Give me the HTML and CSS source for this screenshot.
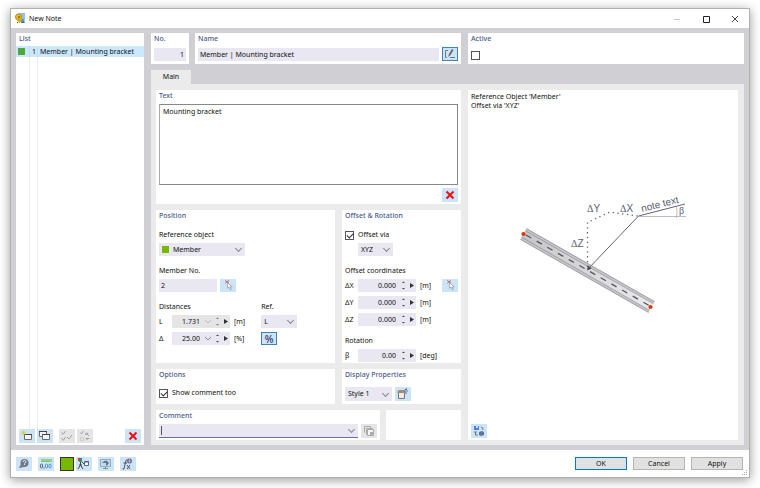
FILE: index.html
```html
<!DOCTYPE html>
<html lang="en">
<head>
    <meta charset="UTF-8">
    <meta name="viewport" content="width=device-width, initial-scale=1.0">
    <title>New Note</title>
    <link rel="stylesheet" href="styles.css">
</head>
<body>
    <div class="window">
        <header class="titlebar">
            <svg class="app-icon" width="11" height="11" viewBox="0 0 11 11">
                <path d="M3 0h7v8H5z" fill="#8fc4e8"/>
                <path d="M6 8l2-3 2 5H6z" fill="#4a91c4"/>
                <circle cx="3.500" cy="4" r="3" fill="#f0c02c" stroke="#b98a10"/>
                <path d="M3 4l4 0-1 5-2 1-2-3z" fill="#dca718"/>
                <circle cx="4" cy="4" r="1" fill="#8c6a12"/>
                <path d="M7 9h2v1H7zM2 9h1v1H2z" fill="#327a52"/>
            </svg>
            <h1>New Note</h1>
            <div class="window-buttons">
                <button aria-label="Minimize"><svg width="8" height="8" viewBox="0 0 8 8"><path d="M1 4.500h6" stroke="#ccc" fill="none"/></svg></button>
                <button aria-label="Maximize"><svg width="8" height="8" viewBox="0 0 8 8"><path d="M1.500 1.500h6v6h-6z" stroke="#222" fill="none"/></svg></button>
                <button aria-label="Close"><svg width="8" height="8" viewBox="0 0 8 8"><path d="M1 1l6 6M7 1L1 7" stroke="#444" fill="none"/></svg></button>
            </div>
        </header>

        <main class="content">
            <section class="panel list-panel">
                <h2>List</h2>
                <ul class="list">
                    <li class="selected"><span class="cell"><i class="swatch"></i></span><span class="cell number">1</span><span class="name">Member | Mounting bracket</span></li>
                    <li class="filler"><span class="cell"></span><span class="cell number"></span><span></span></li>
                </ul>
                <div class="toolbar">
                    <button class="icon-button" aria-label="New"><svg viewBox="0 0 16 14"><path d="M5.500 5.500h7v5h-7z" fill="#f4f4f4" stroke="#6b6b6b"/><path d="M5 5.500h8" stroke="#444"/><path d="M4.500 1.500v5M2 4h5M2.500 2l4 4M6.500 2l-4 4" stroke="#d6cf3a" stroke-width=".8"/></svg></button>
                    <button class="icon-button" aria-label="Copy"><svg viewBox="0 0 16 14"><path d="M2.500 2.500h7v5h-7z" fill="#f4f4f4" stroke="#6b6b6b"/><path d="M2 2.500h8" stroke="#444"/><path d="M5.500 5.500h7v5h-7z" fill="#f4f4f4" stroke="#6b6b6b"/><path d="M5 5.500h8" stroke="#444"/></svg></button>
                    <button class="icon-button gap" disabled aria-label="Check all"><svg viewBox="0 0 16 14"><path d="M3.500 3.500l1 1.500 2-3M3.500 9.500l1 1.500 2-3M8 8l2 2 3-4" stroke="#a2a2a2" fill="none"/><path d="M3 3v2h2M3 9v2h2" stroke="#bbb" fill="none"/></svg></button>
                    <button class="icon-button" disabled aria-label="Invert selection"><svg viewBox="0 0 16 14"><path d="M3.500 3.500l1 1.500 2-3M8 5h3l-1-1.500M8 5q3 0 4 2M12.500 9.500H9L10.500 11" stroke="#a2a2a2" fill="none"/><path d="M3.500 8.500h3v3h-3z" stroke="#ccc" fill="none"/></svg></button>
                    <button class="icon-button last" aria-label="Delete"><svg viewBox="0 0 16 14"><path d="M4.500 3.500l7 7M11.500 3.500l-7 7" stroke="#f01010" stroke-width="2"/></svg></button>
                </div>
            </section>

            <div class="details">
                <div class="top-row">
                    <div class="identity">
                        <section class="panel number-panel">
                            <h2><label for="number">No.</label></h2>
                            <input class="field" type="text" id="number" value="1">
                        </section>
                        <section class="panel name-panel">
                            <h2><label for="name">Name</label></h2>
                            <div class="row">
                                <input class="field" type="text" id="name" value="Member | Mounting bracket">
                                <button class="icon-button pressed" aria-label="Edit name"><svg viewBox="0 0 16 14"><path d="M6 3.500H3.500v7H5M8 10.500h5" stroke="#777" fill="none"/><path d="M6 10l1-3 3-5 1.500 1-3 5z" fill="#666"/></svg></button>
                            </div>
                        </section>
                    </div>
                    <section class="panel active-panel">
                        <h2><label for="active">Active</label></h2>
                        <input class="check" type="checkbox" id="active">
                    </section>
                </div>

                <nav class="tabs"><button class="tab">Main</button></nav>

                <div class="tab-page">
                    <div class="forms">
                        <section class="panel text-panel">
                            <h2><label for="text">Text</label></h2>
                            <textarea id="text">Mounting bracket</textarea>
                            <button class="icon-button" aria-label="Clear text"><svg viewBox="0 0 16 14"><path d="M4.500 3.500l7 7M11.500 3.500l-7 7" stroke="#f01010" stroke-width="2"/></svg></button>
                        </section>

                        <div class="split">
                            <section class="panel">
                                <h2>Position</h2>
                                <div class="group">
                                    <label for="reference">Reference object</label>
                                    <div class="select with-swatch">
                                        <select id="reference"><option>Member</option></select>
                                    </div>
                                </div>
                                <div class="group">
                                    <label for="member">Member No.</label>
                                    <div class="row">
                                        <input class="field member-field" type="text" id="member" value="2">
                                        <button class="icon-button" aria-label="Pick member"><svg viewBox="0 0 16 14"><path d="M5 1.500l4 3M9 1.500l-4 3" stroke="#d9505c"/><path d="M7.500 4v6l1.500-1.500 1.500 3h1l-1-3h2z" fill="#fff" stroke="#999" stroke-width=".8"/></svg></button>
                                    </div>
                                </div>
                                <div class="pair">
                                    <div class="group">
                                        <span class="caption">Distances</span>
                                        <div class="value-row">
                                            <label for="length">L</label>
                                            <div class="spin combo off">
                                                <input type="text" id="length" value="1.731" disabled>
                                                <svg viewBox="0 0 28 13"><path d="M3 5l3 3 3-3" stroke="#bbb" fill="none"/><path d="M14 4l1.500-1.500L17 4zM14 9l1.500 1.500L17 9z" fill="#777"/><path d="M22 4v5l4-2.500z" fill="#333"/></svg>
                                            </div>
                                            <span>[m]</span>
                                        </div>
                                        <div class="value-row">
                                            <label for="delta">Δ</label>
                                            <div class="spin combo">
                                                <input type="text" id="delta" value="25.00">
                                                <svg viewBox="0 0 28 13"><path d="M3 5l3 3 3-3" stroke="#888" fill="none"/><path d="M14 4l1.500-1.500L17 4zM14 9l1.500 1.500L17 9z" fill="#444"/><path d="M22 4v5l4-2.500z" fill="#333"/></svg>
                                            </div>
                                            <span>[%]</span>
                                        </div>
                                    </div>
                                    <div class="group ref-group">
                                        <label for="ref">Ref.</label>
                                        <div class="select">
                                            <select id="ref"><option>L</option></select>
                                        </div>
                                        <button class="icon-button pressed percent">%</button>
                                    </div>
                                </div>
                            </section>

                            <section class="panel">
                                <h2>Offset &amp; Rotation</h2>
                                <div class="group">
                                    <div class="check-row">
                                        <input class="check" type="checkbox" id="offset-via" checked>
                                        <label for="offset-via">Offset via</label>
                                    </div>
                                    <div class="select axis-select">
                                        <select aria-label="Offset axes"><option>XYZ</option></select>
                                    </div>
                                </div>
                                <div class="group">
                                    <span class="caption">Offset coordinates</span>
                                    <div class="value-row">
                                        <label for="dx">ΔX</label>
                                        <div class="spin">
                                            <input type="text" id="dx" value="0.000">
                                            <svg viewBox="10 0 18 13"><path d="M14 4l1.500-1.500L17 4zM14 9l1.500 1.500L17 9z" fill="#444"/><path d="M22 4v5l4-2.500z" fill="#333"/></svg>
                                        </div>
                                        <span>[m]</span>
                                        <button class="icon-button last" aria-label="Pick offset"><svg viewBox="0 0 16 14"><path d="M5 1.500l4 3M9 1.500l-4 3" stroke="#d9505c"/><path d="M7.500 4v6l1.500-1.500 1.500 3h1l-1-3h2z" fill="#fff" stroke="#999" stroke-width=".8"/></svg></button>
                                    </div>
                                    <div class="value-row">
                                        <label for="dy">ΔY</label>
                                        <div class="spin">
                                            <input type="text" id="dy" value="0.000">
                                            <svg viewBox="10 0 18 13"><path d="M14 4l1.500-1.500L17 4zM14 9l1.500 1.500L17 9z" fill="#444"/><path d="M22 4v5l4-2.500z" fill="#333"/></svg>
                                        </div>
                                        <span>[m]</span>
                                    </div>
                                    <div class="value-row">
                                        <label for="dz">ΔZ</label>
                                        <div class="spin">
                                            <input type="text" id="dz" value="0.000">
                                            <svg viewBox="10 0 18 13"><path d="M14 4l1.500-1.500L17 4zM14 9l1.500 1.500L17 9z" fill="#444"/><path d="M22 4v5l4-2.500z" fill="#333"/></svg>
                                        </div>
                                        <span>[m]</span>
                                    </div>
                                </div>
                                <div class="group">
                                    <span class="caption">Rotation</span>
                                    <div class="value-row">
                                        <label for="beta">β</label>
                                        <div class="spin">
                                            <input type="text" id="beta" value="0.00">
                                            <svg viewBox="10 0 18 13"><path d="M14 4l1.500-1.500L17 4zM14 9l1.500 1.500L17 9z" fill="#444"/><path d="M22 4v5l4-2.500z" fill="#333"/></svg>
                                        </div>
                                        <span>[deg]</span>
                                    </div>
                                </div>
                            </section>
                        </div>

                        <div class="split">
                            <section class="panel options-panel">
                                <h2>Options</h2>
                                <div class="check-row">
                                    <input class="check" type="checkbox" id="show-comment" checked>
                                    <label for="show-comment">Show comment too</label>
                                </div>
                            </section>
                            <section class="panel options-panel">
                                <h2><label for="style">Display Properties</label></h2>
                                <div class="row">
                                    <div class="select style-select">
                                        <select id="style"><option>Style 1</option></select>
                                    </div>
                                    <button class="icon-button" aria-label="Edit style"><svg viewBox="0 0 16 14"><path d="M3.500 5.500h6v6h-6z" fill="#f0ece6" stroke="#777"/><path d="M2 5l2-2h5l2 2-1 1H3z" fill="#a88a6c"/><path d="M9 3l3-2v2z" fill="#4f79b8"/><path d="M9 4h4M10 6h2" stroke="#5d7fa5"/></svg></button>
                                </div>
                            </section>
                        </div>

                        <div class="comment-row">
                            <section class="panel">
                                <h2><label for="comment">Comment</label></h2>
                                <div class="row">
                                    <div class="select comment-box">
                                        <input type="text" id="comment">
                                    </div>
                                    <button class="icon-button" disabled aria-label="Comment library"><svg viewBox="0 0 16 14"><path d="M3.500 8.500v-6h6v2M5.500 10.500v-6h6v1" stroke="#aaa" fill="none"/><path d="M6.500 5.500h6v6h-6z" fill="#f4f4f4" stroke="#aaa"/><path d="M9 8h3v3H9z" fill="#aaa"/></svg></button>
                                </div>
                            </section>
                            <section class="panel"></section>
                        </div>
                    </div>

                    <section class="panel preview">
                        <p>Reference Object 'Member'<br>Offset via 'XYZ'</p>
                        <svg class="diagram" width="190" height="154" viewBox="508 190 190 154">
                            <defs>
                                <linearGradient id="beam" x1="0" x2="1">
                                    <stop offset="0" stop-color="#c4c4c4"/>
                                    <stop offset="1" stop-color="#ececec"/>
                                </linearGradient>
                            </defs>
                            <path d="M526.500 228.500l128 73-6 11-128-73z" fill="url(#beam)"/>
                            <path d="M526 229.500l128 73M521 238.500l128 73" stroke="#c3c3c9" stroke-width="2.400"/>
                            <path d="M526.500 228.500l128 73M525.500 230.800l128 73M521.500 237.200l128 73M520.500 239.500l128 73" stroke="#85858e" stroke-width=".6"/>
                            <path d="M526 235l124 71" stroke="#55556a" stroke-width="1.300" stroke-dasharray="6 6.300"/>
                            <circle cx="523.500" cy="234" r="2.100" fill="#d83a0c"/>
                            <circle cx="650.500" cy="307" r="2.100" fill="#d83a0c"/>
                            <path d="M587.500 267v-44.500L610 212l28 4" fill="none" stroke="#666677" stroke-width="1.300" stroke-dasharray="1.300 3.500"/>
                            <path d="M588 269l50.500-53L685 204" fill="none" stroke="#62627a"/>
                            <path d="M587 270.500l1-5 3.500 3z" fill="#44445c"/>
                            <path d="M638.500 216.500H686M676.500 207q1 5 0 11" fill="none" stroke="#aaaab8" stroke-width=".8"/>
                            <g class="diagram-text">
                                <text x="587" y="212"><tspan class="greek">Δ</tspan>Y</text>
                                <text x="620" y="212"><tspan class="greek">Δ</tspan>X</text>
                                <text x="571" y="247"><tspan class="greek">Δ</tspan>Z</text>
                                <text class="greek" x="679" y="214">β</text>
                                <text transform="translate(642 212) rotate(-14)">note text</text>
                            </g>
                        </svg>
                        <button class="icon-button" aria-label="Switch view"><svg viewBox="0 0 16 14"><path d="M3 2h5v4H3z" fill="#4f80e6"/><path d="M5 2h2v2H5z" fill="#cfe0ff"/><path d="M10 3q2 0 2 3M3 8h3M4.500 8v3H7" stroke="#777" fill="none"/><path d="M8 8l3-1 2 1v3l-3 1-2-1z" fill="#627599"/></svg></button>
                    </section>
                </div>
            </div>
        </main>

        <footer class="footer">
            <div class="tools">
                <button class="icon-button" aria-label="Help"><svg viewBox="0 0 16 14"><circle cx="8.500" cy="6" r="4" fill="#747a80"/><path d="M5 7l-2 4 5-1z" fill="#747a80"/><path d="M7 5q0-1.500 1.500-1.500T10 5L8.500 6.500V8" stroke="#d7e8f5" fill="none"/></svg></button>
                <button class="icon-button" aria-label="Units"><svg viewBox="0 0 16 14"><path d="M3 2h11v3H3z" fill="#93d28e"/><path d="M5 4v1M7 4v1M9 4v1M11 4v1" stroke="#5da45d" stroke-width=".7"/><ellipse cx="3.500" cy="9" rx="1.200" ry="2" fill="none" stroke="#444" stroke-width=".8"/><path d="M5.500 10.500h1v1h-1z" fill="#444"/><ellipse cx="8.500" cy="9" rx="1.200" ry="2" fill="none" stroke="#3f7fd6" stroke-width=".8"/><ellipse cx="12" cy="9" rx="1.200" ry="2" fill="none" stroke="#3f7fd6" stroke-width=".8"/></svg></button>
                <button class="color-button" aria-label="Color"></button>
                <button class="icon-button" aria-label="Display"><svg viewBox="0 0 16 14"><path d="M2 1h2v3H2z" fill="#d33"/><path d="M4 1h2v2H4z" fill="#3577d4"/><path d="M3 3h3v2H3z" fill="#38a03b"/><path d="M4.500 5v3L2 12M4.500 8L7 12M3 8h3M6 5l2 2" stroke="#444" fill="none"/><path d="M8.500 4.500h4v4h-4z" fill="#fff" stroke="#667"/><path d="M8 5h5" stroke="#3567a8"/></svg></button>
                <button class="icon-button gap" aria-label="View"><svg viewBox="0 0 16 14"><path d="M2.500 2.500h10v7h-10z" fill="#c2dcef" stroke="#9aabb8"/><path d="M7.500 10v2M5 11.500h5" stroke="#888"/><path d="M4 6q4-5 7 0-1 2-3 3V6z" fill="#5a7a98"/></svg></button>
                <button class="icon-button gap" aria-label="Function"><svg viewBox="0 0 16 14"><path d="M8 3Q6 2 5.500 5L4 12H2.500M3.500 6H7M7 8l3 4M10 8l-3 4" stroke="#555" fill="none"/><circle cx="9.500" cy="4" r="2.500" fill="#5f6689"/><path d="M9.500 2v4M7.500 4h4" stroke="#c2cade" stroke-width=".7"/></svg></button>
            </div>
            <div class="actions">
                <button class="action primary">OK</button>
                <button class="action">Cancel</button>
                <button class="action">Apply</button>
            </div>
            <svg class="grip" width="6" height="6" viewBox="0 0 6 6"><path d="M4 0h1v1H4zM2 2h1v1H2zM4 2h1v1H4zM0 4h1v1H0zM2 4h1v1H2zM4 4h1v1H4z" fill="#aaa"/></svg>
        </footer>
    </div>
</body>
</html>
```
FILE: styles.css
```css
* {
    box-sizing: border-box;
}
body {
    margin: 0;
    padding: 8px 10px 10px;
    min-height: 100vh;
    display: flex;
    background-color: #fff;
    font-family: "Noto Sans", sans-serif;
    font-size: 7px;
    line-height: 12px;
    color: #111;
}
h1, h2, p, ul {
    margin: 0;
    padding: 0;
    font-size: 7px;
    font-weight: normal;
}
button, input, select, textarea {
    margin: 0;
    padding: 0;
    border: none;
    border-radius: 0;
    font: inherit;
    color: inherit;
    background: none;
    outline: none;
}
svg {
    display: block;
}
.window {
    flex: 1;
    min-width: 0;
    display: flex;
    flex-direction: column;
    border: 1px solid #b0b0b0;
    background-color: #fff;
    box-shadow: 0 2px 10px rgba(0, 0, 0, 0.4);
}

/* title bar */
.titlebar {
    display: flex;
    align-items: center;
    height: 19px;
    padding: 0 10px 0 4px;
    gap: 3px;
}
.window-buttons {
    display: flex;
    gap: 21px;
    margin-left: auto;
}

/* panels */
.content {
    flex: 1;
    display: flex;
    gap: 7px;
    padding: 5px;
    background-color: #d0cfd4;
}
.panel {
    min-width: 0;
    padding: 0 3px;
    background-color: #fff;
}
.panel h2 {
    height: 12px;
    font-weight: 500;
    color: #4a5b8a;
}
.row {
    display: flex;
    gap: 3px;
}

/* list */
.list-panel {
    width: 128px;
    display: flex;
    flex-direction: column;
    padding-bottom: 2px;
}
.list {
    flex: 1;
    display: flex;
    flex-direction: column;
    margin: 1px -3px 0;
    list-style: none;
}
.list li {
    display: grid;
    grid-template-columns: 14px 8px 1fr;
    height: 11px;
    line-height: 11px;
}
.list .filler {
    flex: 1;
}
.list .selected {
    background-color: #cce8ff;
}
.cell {
    border-right: 1px solid #eee;
}
.selected .cell {
    border-color: #c1dff7;
}
.number {
    text-align: right;
    padding-right: 1px;
}
.name {
    padding-left: 2px;
    white-space: nowrap;
}
.swatch {
    display: block;
    width: 7px;
    height: 7px;
    margin: 2px;
    background-color: #4fa83d;
}
.toolbar {
    display: flex;
    gap: 2px;
}
.toolbar .gap {
    margin-left: 4px;
}
.last {
    margin-left: auto;
}

/* controls */
.icon-button {
    flex: none;
    width: 16px;
    height: 14px;
    background-color: #cce4f7;
}
.icon-button svg {
    width: 16px;
    height: 14px;
}
.icon-button:disabled {
    background-color: #e5e5e5;
}
.pressed {
    border: 1px solid #3d83ba;
}
.pressed svg {
    margin: -1px;
}
.percent {
    font-size: 10px;
    font-weight: 600;
    color: #4c4c80;
}
.field {
    display: block;
    width: 100%;
    min-width: 0;
    height: 13px;
    padding: 0 2px;
    background-color: #e8e7f2;
}
.check {
    appearance: none;
    display: block;
    width: 9px;
    height: 9px;
    border: 1px solid #555;
    background-color: #fff;
}
.check:checked::after {
    content: "";
    display: block;
    width: 5px;
    height: 3px;
    margin: 1px;
    border: solid #333;
    border-width: 0 0 1px 1px;
    transform: rotate(-45deg);
}
.check-row {
    display: flex;
    align-items: center;
    gap: 4px;
    height: 12px;
}
.select {
    display: grid;
    align-items: center;
    height: 13px;
    background-color: #e8e7f2;
}
.select > *,
.select::before,
.select::after {
    grid-area: 1 / 1;
}
.select select {
    appearance: none;
    width: 100%;
    height: 13px;
    padding: 0 3px;
}
.select::after {
    content: "";
    justify-self: end;
    width: 4px;
    height: 4px;
    margin: 0 4px 2px 0;
    border: solid #888;
    border-width: 0 1px 1px 0;
    transform: rotate(45deg);
    pointer-events: none;
}
.with-swatch {
    width: 86px;
}
.with-swatch::before {
    content: "";
    width: 7px;
    height: 7px;
    margin-left: 3px;
    background-color: #7ab800;
}
.with-swatch select {
    padding-left: 14px;
}
.spin {
    display: flex;
    width: 58px;
    height: 13px;
    background-color: #e8e7f2;
}
.spin input {
    flex: 1;
    min-width: 0;
    padding-right: 2px;
    text-align: right;
}
.spin svg {
    flex: none;
    width: 18px;
    height: 13px;
}
.spin.combo svg {
    width: 28px;
}
.off {
    background-color: #e5e5e5;
}

/* header row */
.details {
    flex: 1;
    min-width: 0;
    display: flex;
    flex-direction: column;
}
.top-row {
    display: grid;
    grid-template-columns: 310fr 276fr;
    gap: 7px;
    height: 31px;
    margin-bottom: 6px;
}
.identity {
    display: flex;
    gap: 6px;
}
.number-panel {
    width: 38px;
}
.name-panel {
    flex: 1;
}
.number-panel .field {
    margin-top: 3px;
    text-align: right;
}
.name-panel .row {
    align-items: center;
    margin-top: 2px;
}
.active-panel .check {
    margin-top: 6px;
}
.tab {
    display: block;
    width: 40px;
    height: 14px;
    background-color: #ebebeb;
}

/* tab page */
.tab-page {
    flex: 1;
    display: grid;
    grid-template-columns: 305fr 270fr;
    gap: 7px;
    padding: 6px 6px 5px 5px;
    background-color: #ebebeb;
}
.forms {
    display: flex;
    flex-direction: column;
    gap: 6px;
}
.text-panel {
    flex: 1;
    display: flex;
    flex-direction: column;
    align-items: flex-end;
    padding-bottom: 2px;
}
.text-panel h2 {
    align-self: flex-start;
}
.text-panel textarea {
    flex: 1;
    width: 100%;
    min-height: 79px;
    margin: 2px 0 3px;
    padding: 1px 3px;
    border: 1px solid #888;
    border-left-color: #aaa;
    resize: none;
}
.split {
    display: grid;
    grid-template-columns: 179fr 119fr;
    gap: 7px;
}
.split > .panel {
    padding-bottom: 1px;
}
.group {
    display: flex;
    flex-direction: column;
    align-items: flex-start;
    margin-top: 9px;
}
h2 + .group {
    margin-top: 7px;
}
.group > label,
.group > .caption,
.group > .check-row {
    margin-bottom: 2px;
}
.member-field {
    width: 58px;
}
.group .icon-button {
    height: 13px;
}
.group .icon-button svg {
    height: 13px;
}
.axis-select {
    width: 35px;
    margin-left: 13px;
}
.value-row {
    display: flex;
    align-items: center;
    gap: 4px;
    align-self: stretch;
    height: 13px;
}
.value-row + .value-row,
.ref-group .percent {
    margin-top: 4px;
}
.value-row label {
    width: 9px;
}
.pair {
    display: flex;
    gap: 16px;
}
.ref-group {
    width: 36px;
}
.ref-group .select {
    width: 36px;
}
.options-panel {
    height: 35px;
}
.options-panel .check-row,
.options-panel .row {
    margin-top: 6px;
}
.style-select {
    width: 47px;
    height: 14px;
}
.comment-row {
    display: grid;
    grid-template-columns: 224fr 75fr;
    gap: 6px;
    height: 30px;
}
.comment-row .row {
    margin-top: 2px;
}
.comment-box {
    flex: 1;
    height: 14px;
    border-bottom: 1px solid #6c6cb4;
}
.comment-box input {
    width: 100%;
    padding: 0 3px;
}
.comment-box::before {
    content: "";
    width: 1px;
    height: 9px;
    margin-left: 2px;
    background-color: #555;
}

/* preview */
.preview {
    display: flex;
    flex-direction: column;
    padding: 2px 3px;
}
.preview p {
    line-height: 9px;
}
.diagram {
    margin: auto;
    max-width: 100%;
}
.diagram-text {
    font-family: "Liberation Sans", sans-serif;
    font-size: 10px;
    fill: #5c5c70;
}
.greek {
    font-family: "Liberation Serif", serif;
}

/* footer */
.footer {
    position: relative;
    display: flex;
    align-items: center;
    justify-content: space-between;
    height: 27px;
    padding: 0 6px 0 5px;
}
.tools {
    display: flex;
    gap: 2px;
}
.tools .gap,
.tools .icon-button:nth-child(2),
.color-button {
    margin-left: 4px;
}
.color-button {
    width: 14px;
    height: 14px;
    border: 1px solid #333;
    background-color: #7ab800;
}
.actions {
    display: flex;
    gap: 6px;
}
.action {
    width: 52px;
    height: 13px;
    border: 1px solid #b5b5b5;
    background-color: #e1e1e1;
    line-height: 11px;
}
.primary {
    border-color: #0078d7;
}
.grip {
    position: absolute;
    right: 1px;
    bottom: 1px;
}
```
